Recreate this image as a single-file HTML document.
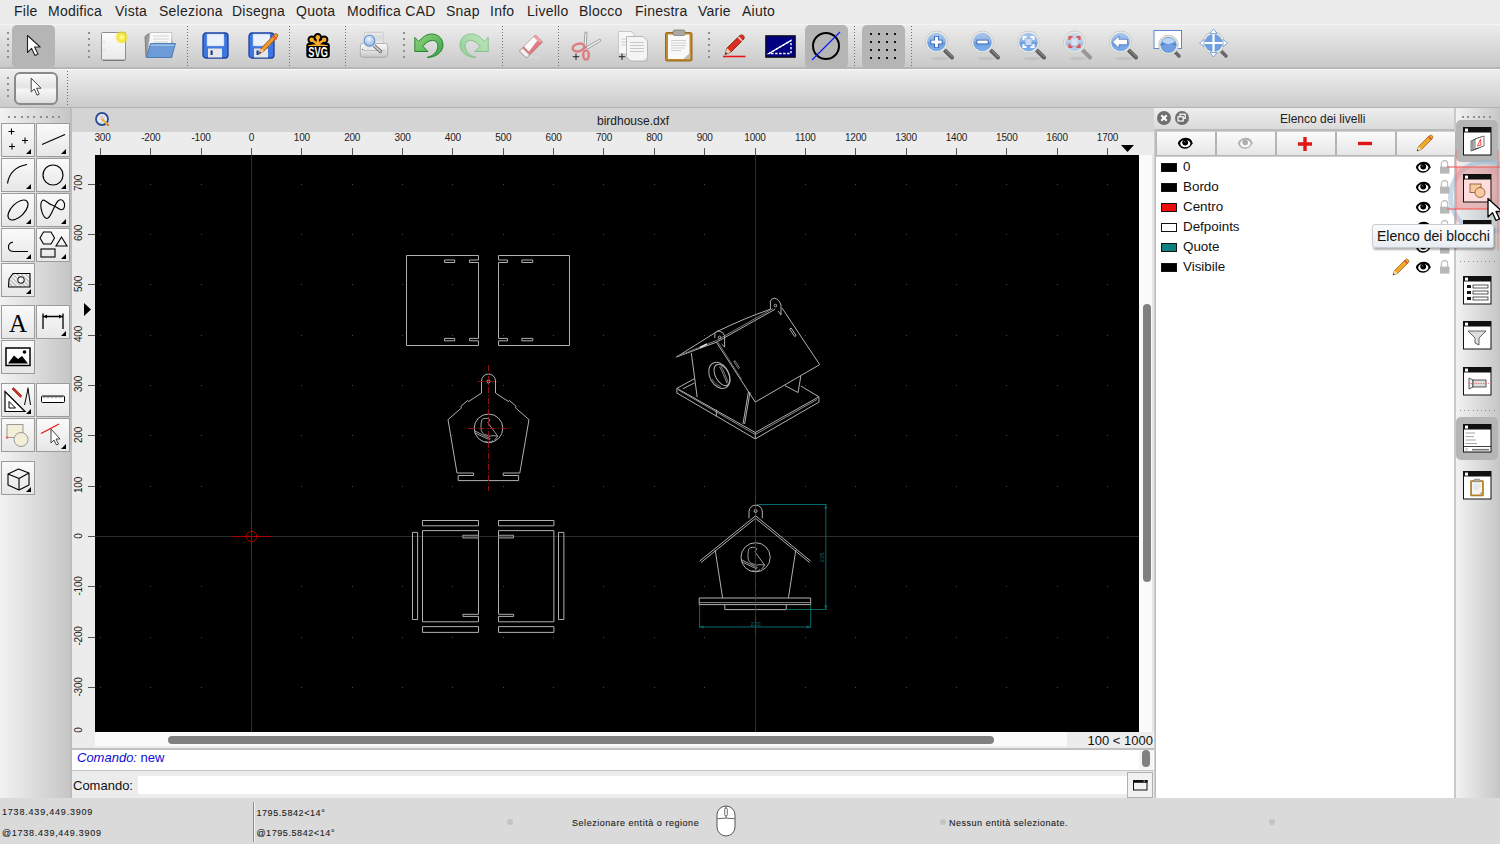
<!DOCTYPE html>
<html><head><meta charset="utf-8"><style>
*{box-sizing:border-box;margin:0;padding:0}
html,body{width:1500px;height:844px;overflow:hidden;background:#ececec;font-family:"Liberation Sans",sans-serif;position:relative}
.a{position:absolute}
svg.a{overflow:visible}
#menubar{left:0;top:0;width:1500px;height:25px;background:#ebebeb;border-bottom:1px solid #f4f4f4}
#menubar span{position:absolute;top:3px;font-size:14px;color:#1e1e1e;line-height:16px;letter-spacing:0.25px}
#tb1{left:0;top:25px;width:1500px;height:44px;background:linear-gradient(#ececec,#c9c9c9);border-bottom:2px solid #b6b6b6}
#tb2{left:0;top:69px;width:1500px;height:39px;background:linear-gradient(#eeeeee,#cbcbcb);border-top:1px solid #f6f6f6;border-bottom:1px solid #b3b3b3}
#leftp{left:0;top:108px;width:72px;height:690px;background:linear-gradient(90deg,#f2f2f2,#c6c6c6);border-right:2px solid #bdbdbd}
#mdititle{left:72px;top:108px;width:1082px;height:24px;background:#d4d4d4}
#hruler{left:72px;top:132px;width:1082px;height:23px;background:#ececec}
#vruler{left:72px;top:155px;width:23px;height:592px;background:#ececec}
#canvas{left:95px;top:155px;width:1044px;height:577px;background:#000;overflow:hidden}
#vscroll{left:1139px;top:155px;width:15px;height:577px;background:linear-gradient(90deg,#fafafa 0 13px,#e6e6e6 13px)}
#hscroll{left:95px;top:732px;width:1059px;height:16px;background:linear-gradient(#fafafa 0 14px,#ededed 14px)}
#cmdout{left:72px;top:748px;width:1082px;height:23px;background:#fff;border-top:2px solid #c0c0c0;border-bottom:1px solid #c4c4c4}
#cmdin{left:72px;top:771px;width:1082px;height:27px;background:#ececec}
#status{left:0;top:798px;width:1500px;height:46px;background:#dadada}
#dock{left:1154px;top:108px;width:302px;height:690px;background:#ececec;border-right:2px solid #c9c9c9}
#rtb{left:1456px;top:108px;width:44px;height:690px;background:linear-gradient(90deg,#f2f2f2,#c6c6c6)}
.rl{font-size:10px;color:#222;line-height:10px;letter-spacing:-0.2px}
.gd{width:2px;height:2px;background:#8f8f8f}
.sep{width:1px;background:repeating-linear-gradient(#6e6e6e 0 1px,transparent 1px 3px)}
.selbtn{background:#b5b5b5;border-radius:5px}
.lb{width:34px;height:34px;border:1px solid #9c9c9c;background:linear-gradient(#fafafa,#e7e7e7)}
.lyb{width:60px;height:25px;border:1px solid #b5b5b5;border-top-color:#d0d0d0;background:linear-gradient(#fbfbfb,#e6e6e6)}
.st{font-size:9px;line-height:12px;color:#1a1a1a;-webkit-text-stroke:0.1px #1a1a1a;white-space:nowrap}
</style></head><body>
<div id="menubar" class="a"><span style="left:14px">File</span><span style="left:48px">Modifica</span><span style="left:115px">Vista</span><span style="left:159px">Seleziona</span><span style="left:232px">Disegna</span><span style="left:296px">Quota</span><span style="left:347px">Modifica CAD</span><span style="left:446px">Snap</span><span style="left:490px">Info</span><span style="left:527px">Livello</span><span style="left:579px">Blocco</span><span style="left:635px">Finestra</span><span style="left:698px">Varie</span><span style="left:742px">Aiuto</span></div>
<div id="tb1" class="a"></div>
<div class="a gd" style="left:7px;top:32px"></div><div class="a gd" style="left:7px;top:38px"></div><div class="a gd" style="left:7px;top:44px"></div><div class="a gd" style="left:7px;top:50px"></div><div class="a gd" style="left:7px;top:56px"></div>
<div class="a selbtn" style="left:12px;top:25px;width:43px;height:43px"></div>
<svg class="a" style="left:26px;top:34px" width="16" height="24" viewBox="0 0 16 24"><path d="M1.5 1.5V18.5L5.6 14.4L9 21.5L12 20L8.6 13H14.2Z" fill="#fff" stroke="#222" stroke-width="1.1" stroke-linejoin="round"/></svg>
<div class="a gd" style="left:88px;top:32px"></div><div class="a gd" style="left:88px;top:38px"></div><div class="a gd" style="left:88px;top:44px"></div><div class="a gd" style="left:88px;top:50px"></div><div class="a gd" style="left:88px;top:56px"></div>
<svg class="a" style="left:99px;top:30px" width="30" height="32" viewBox="0 0 30 32"><defs><linearGradient id="pg" x1="0" y1="0" x2="0" y2="1"><stop offset="0" stop-color="#fdfdfd"/><stop offset="1" stop-color="#e9e9e9"/></linearGradient><radialGradient id="glow"><stop offset="0" stop-color="#ffffff"/><stop offset="0.25" stop-color="#fff36a"/><stop offset="0.6" stop-color="#f2e21c" stop-opacity="0.9"/><stop offset="1" stop-color="#f2e21c" stop-opacity="0"/></radialGradient></defs><rect x="2.5" y="2.5" width="24" height="27.5" rx="1" fill="url(#pg)" stroke="#8e8e8e"/><path d="M4 30.5h22" stroke="#777" stroke-width="1"/><circle cx="5" cy="12" r="0.5" fill="#999"/><circle cx="5" cy="20" r="0.5" fill="#999"/><circle cx="22.7" cy="7.3" r="7" fill="url(#glow)"/></svg>
<svg class="a" style="left:142px;top:30px" width="36" height="30" viewBox="0 0 36 30"><path d="M3 6.5L6 4H28L30 12V27H4Z" fill="#9b9b9b" stroke="#6f6f6f" stroke-width="0.8"/><path d="M8 2.5H30L29 20H6Z" fill="#fafafa" stroke="#b9b9b9" stroke-width="0.8"/><path d="M11 6H27M11 9H27M11 12H26" stroke="#cfcfcf" stroke-width="1"/><path d="M8.5 13.5H33.5L29.5 27.5H4.5Z" fill="#6d9bd7" stroke="#4b78b5" stroke-width="0.9"/><path d="M9 14.5H32.5L32 16H8.8Z" fill="#9fc1ec"/></svg>
<div class="a sep" style="left:187px;top:26px;height:41px"></div>
<svg class="a" style="left:202px;top:32px" width="28" height="28" viewBox="0 0 28 28"><rect x="1" y="1" width="25" height="25" rx="3" fill="#3d78e0" stroke="#1e3e9c" stroke-width="1.3"/><rect x="5" y="2" width="17" height="12" fill="#eaf1fb"/><path d="M5 2h17v12H5z" fill="none" stroke="#9fb9e4" stroke-width="0.5"/><rect x="6" y="16.5" width="14" height="9" fill="#e6e6e6"/><rect x="8.5" y="18.5" width="2.2" height="4.5" fill="#1b3c9c"/><rect x="22.5" y="3" width="1" height="1.2" fill="#1e3e9c"/></svg>
<svg class="a" style="left:248px;top:32px" width="30" height="28" viewBox="0 0 30 28"><rect x="1" y="1" width="25" height="25" rx="3" fill="#3d78e0" stroke="#1e3e9c" stroke-width="1.3"/><rect x="5" y="2" width="17" height="12" fill="#eaf1fb"/><path d="M5 2h17v12H5z" fill="none" stroke="#9fb9e4" stroke-width="0.5"/><rect x="6" y="16.5" width="14" height="9" fill="#e6e6e6"/><rect x="8.5" y="18.5" width="2.2" height="4.5" fill="#1b3c9c"/><rect x="22.5" y="3" width="1" height="1.2" fill="#1e3e9c"/><path d="M11 22L13.5 16L26.5 2.5C27.5 1.5 29 1.5 29.5 2.5C30 3.5 29.8 4.5 29 5.3L16 19Z" fill="#f29a2e" stroke="#9c4f0a" stroke-width="0.9"/><path d="M25 4L28.5 7.5" stroke="#e85a3a" stroke-width="2"/><path d="M11 22L13.3 16.6L15.8 19.2Z" fill="#f2d2a8"/><path d="M11 22L12 19.8L13.2 21Z" fill="#222"/></svg>
<div class="a sep" style="left:289px;top:26px;height:41px"></div>
<svg class="a" style="left:300px;top:30px" width="36" height="32" viewBox="0 0 36 32"><g stroke="#000" stroke-width="3.2" stroke-linecap="round"><path d="M11.7 9.7L17.8 14.5M24.2 9.7L17.8 14.5M17.8 7.2V14.5"/><circle cx="17.8" cy="7.2" r="2.6"/><circle cx="11.7" cy="9.7" r="2.6"/><circle cx="24.2" cy="9.7" r="2.6"/></g><rect x="6.3" y="12.8" width="23.5" height="15.2" rx="3.2" fill="#000"/><g fill="#f9ad2c"><circle cx="17.8" cy="7.2" r="2.3"/><circle cx="11.7" cy="9.7" r="2.3"/><circle cx="24.2" cy="9.7" r="2.3"/></g><path d="M11.7 9.7L17.8 14.5M24.2 9.7L17.8 14.5M17.8 7.2V14.5" stroke="#f9ad2c" stroke-width="2.3"/><path d="M8 15.3Q18 13.3 28 15.3V16H8Z" fill="#f9ad2c"/><text transform="translate(18.1 26.8) scale(0.66 1)" font-family="Liberation Sans" font-weight="bold" font-size="14" fill="#fff" text-anchor="middle">SVG</text></svg>
<div class="a sep" style="left:345px;top:26px;height:41px"></div>
<svg class="a" style="left:358px;top:30px" width="32" height="30" viewBox="0 0 32 30"><defs><linearGradient id="prg" x1="0" y1="0" x2="0" y2="1"><stop offset="0" stop-color="#fafafa"/><stop offset="0.55" stop-color="#e2e2e2"/><stop offset="1" stop-color="#c4c4c4"/></linearGradient><radialGradient id="lens" cx="0.45" cy="0.35"><stop offset="0" stop-color="#eef4fb"/><stop offset="1" stop-color="#a8c2e2"/></radialGradient></defs><rect x="6.3" y="2.3" width="19" height="13" rx="1" fill="#e9e9e9" stroke="#c2c2c2" stroke-width="0.8"/><rect x="14" y="5" width="10" height="6" fill="#dcdcdc"/><rect x="2.3" y="13.5" width="27.4" height="13.8" rx="2.5" fill="url(#prg)" stroke="#a2a2a2" stroke-width="0.8"/><path d="M5 20.5H27" stroke="#bdbdbd" stroke-width="1"/><circle cx="4.6" cy="19.3" r="0.6" fill="#555"/><path d="M16 15.5L22.5 21.5" stroke="#555" stroke-width="3.2" stroke-linecap="round"/><path d="M16 15.5L22.5 21.5" stroke="#c9c9c9" stroke-width="1.8" stroke-linecap="round"/><circle cx="11.5" cy="10.7" r="6.6" fill="#f4f4f4" stroke="#d0d0d0" stroke-width="0.6"/><circle cx="11.5" cy="10.7" r="5.4" fill="url(#lens)" stroke="#5b8fd0" stroke-width="1.1"/></svg>
<div class="a gd" style="left:403px;top:32px"></div><div class="a gd" style="left:403px;top:38px"></div><div class="a gd" style="left:403px;top:44px"></div><div class="a gd" style="left:403px;top:50px"></div><div class="a gd" style="left:403px;top:56px"></div>
<svg class="a" style="left:408px;top:28px" width="40" height="36" viewBox="0 0 40 36"><defs><linearGradient id="ug1" x1="0" y1="0" x2="1" y2="1"><stop offset="0" stop-color="#93d47c"/><stop offset="1" stop-color="#36a446"/></linearGradient></defs><path d="M6.8 9.4L10.7 13.6C14 9.5 18.5 6 23.9 6C30.5 6 35 11 35 17C35 24 28 29.5 19.2 29.4C25 28 29.9 23.5 29.9 17.9C29.9 14.5 27.5 12.4 24.5 12.4C21 12.4 17.5 15 14.9 18.3L20 23.5H6.8Z" fill="url(#ug1)" stroke="#1c7a2a" stroke-width="0.9" stroke-linejoin="round"/></svg>
<svg class="a" style="left:455px;top:28px" width="40" height="36" viewBox="0 0 40 36"><g transform="translate(40 0) scale(-1 1)"><defs><linearGradient id="ug2" x1="0" y1="0" x2="1" y2="1"><stop offset="0" stop-color="#c4e6bd"/><stop offset="1" stop-color="#8fcf96"/></linearGradient></defs><path d="M6.8 9.4L10.7 13.6C14 9.5 18.5 6 23.9 6C30.5 6 35 11 35 17C35 24 28 29.5 19.2 29.4C25 28 29.9 23.5 29.9 17.9C29.9 14.5 27.5 12.4 24.5 12.4C21 12.4 17.5 15 14.9 18.3L20 23.5H6.8Z" fill="url(#ug2)" stroke="#7cbf84" stroke-width="0.9" stroke-linejoin="round"/></g></svg>
<div class="a sep" style="left:502px;top:26px;height:41px"></div>
<svg class="a" style="left:516px;top:31px" width="30" height="30" viewBox="0 0 30 30"><ellipse cx="15" cy="26" rx="11" ry="1.6" fill="#d6d6d6"/><path d="M3.5 20L19.5 4L26.5 11L10.5 27Z" fill="#e07b80" stroke="#b7646a" stroke-width="0.8"/><path d="M8 15.5L13 20.5L22.5 8L17.5 6Z" fill="#fafafa"/><path d="M17.5 6L22.5 11L26.5 11L19.5 4Z" fill="#eaa3a7"/><path d="M3.5 20L10.5 27L13.5 24L6.5 17Z" fill="#f3f3f3" stroke="#9a9a9a" stroke-width="0.7"/></svg>
<div class="a sep" style="left:558px;top:26px;height:41px"></div>
<svg class="a" style="left:571px;top:30px" width="32" height="32" viewBox="0 0 32 32"><path d="M13 16L14 2L16 2.5L15.2 17Z" fill="#f0f0f0" stroke="#8f8f8f" stroke-width="0.8"/><path d="M15 17L29 9L30 11L16.5 19Z" fill="#f0f0f0" stroke="#8f8f8f" stroke-width="0.8"/><ellipse cx="7.5" cy="17.5" rx="6" ry="3.8" transform="rotate(-15 7.5 17.5)" fill="none" stroke="#e07b80" stroke-width="2.4"/><ellipse cx="15" cy="25" rx="2.8" ry="4.6" fill="none" stroke="#e07b80" stroke-width="2.4"/><path d="M12.5 18L15 17" stroke="#e07b80" stroke-width="2"/><path d="M5 23.5V30M1.8 26.7H8.2" stroke="#222" stroke-width="1"/></svg>
<svg class="a" style="left:617px;top:30px" width="32" height="32" viewBox="0 0 32 32"><path d="M1.5 1.5H14L17 4V24H1.5Z" fill="#f7f7f7" stroke="#bdbdbd" stroke-width="0.8"/><path d="M4 9H13M4 12H13M4 15H13" stroke="#d0d0d0"/><path d="M9.5 6.5H26L30.5 11V31H13.5L9.5 27Z" fill="#f4f4f4" stroke="#a9a9a9" stroke-width="0.8"/><path d="M13 12.5H27M13 15.5H27M13 18.5H27M13 21.5H27" stroke="#c8c8c8"/><path d="M26 31L30.5 26.5V31Z" fill="#cfcfcf"/><path d="M5 23.5V30M1.8 26.7H8.2" stroke="#222" stroke-width="1"/></svg>
<svg class="a" style="left:664px;top:29px" width="30" height="33" viewBox="0 0 30 33"><rect x="1.5" y="3.5" width="26.5" height="28.5" rx="1.5" fill="#c08a2a" stroke="#8f6216" stroke-width="0.9"/><rect x="4" y="5.5" width="21.5" height="24.5" fill="#f9f9f9"/><path d="M7 11.5H22M7 14H22M7 16.5H22M7 19H21M7 21.5H17" stroke="#cfcfcf" stroke-width="1"/><path d="M25.5 24L19.5 30H25.5Z" fill="#bcbcbc"/><rect x="9" y="1" width="12" height="5.5" rx="1.5" fill="#a9a9a2" stroke="#7e7e77" stroke-width="0.8"/></svg>
<div class="a gd" style="left:708px;top:32px"></div><div class="a gd" style="left:708px;top:38px"></div><div class="a gd" style="left:708px;top:44px"></div><div class="a gd" style="left:708px;top:50px"></div><div class="a gd" style="left:708px;top:56px"></div>
<svg class="a" style="left:722px;top:34px" width="26" height="25" viewBox="0 0 26 25"><path d="M1 22.5H23.5" stroke="#e8141b" stroke-width="1.6"/><path d="M3 20.5L5 14L17.5 1.8C18.7 0.7 20.5 0.7 21.5 1.7C22.5 2.7 22.5 4.5 21.3 5.7L9 18Z" fill="#dc2c24" stroke="#7a2a12" stroke-width="0.9"/><path d="M16.2 3L20.2 7" stroke="#e9e3d6" stroke-width="1.6"/><path d="M3 20.5L5 14L9 18Z" fill="#f1cfa6"/><path d="M3 20.5L3.8 18L5.5 19.7Z" fill="#333"/></svg>
<svg class="a" style="left:765px;top:35px" width="31" height="23" viewBox="0 0 31 23"><rect x="0.8" y="0.8" width="29.4" height="21.4" fill="#000080" stroke="#111" stroke-width="1.2"/><path d="M4 18.5L26 5.5V18.5Z" fill="none" stroke="#fff" stroke-width="1.4" stroke-dasharray="2.4 1.6"/><path d="M4 18.5L26 5.5" stroke="#fff" stroke-width="1.4"/></svg>
<div class="a selbtn" style="left:805px;top:25px;width:43px;height:43px"></div>
<svg class="a" style="left:810px;top:30px" width="32" height="32" viewBox="0 0 32 32"><circle cx="16" cy="16" r="13" fill="none" stroke="#000" stroke-width="2"/><path d="M2 30L30 2" stroke="#0a1bf0" stroke-width="1.1"/></svg>
<div class="a sep" style="left:854px;top:26px;height:41px"></div>
<div class="a selbtn" style="left:862px;top:25px;width:43px;height:43px"></div>
<div class="a" style="left:870px;top:33px;width:2px;height:2px;background:#111"></div><div class="a" style="left:870px;top:41px;width:2px;height:2px;background:#111"></div><div class="a" style="left:870px;top:49px;width:2px;height:2px;background:#111"></div><div class="a" style="left:870px;top:57px;width:2px;height:2px;background:#111"></div><div class="a" style="left:878px;top:33px;width:2px;height:2px;background:#111"></div><div class="a" style="left:878px;top:41px;width:2px;height:2px;background:#111"></div><div class="a" style="left:878px;top:49px;width:2px;height:2px;background:#111"></div><div class="a" style="left:878px;top:57px;width:2px;height:2px;background:#111"></div><div class="a" style="left:886px;top:33px;width:2px;height:2px;background:#111"></div><div class="a" style="left:886px;top:41px;width:2px;height:2px;background:#111"></div><div class="a" style="left:886px;top:49px;width:2px;height:2px;background:#111"></div><div class="a" style="left:886px;top:57px;width:2px;height:2px;background:#111"></div><div class="a" style="left:894px;top:33px;width:2px;height:2px;background:#111"></div><div class="a" style="left:894px;top:41px;width:2px;height:2px;background:#111"></div><div class="a" style="left:894px;top:49px;width:2px;height:2px;background:#111"></div><div class="a" style="left:894px;top:57px;width:2px;height:2px;background:#111"></div>
<div class="a sep" style="left:911px;top:26px;height:41px"></div>
<svg class="a" style="left:925px;top:30px" width="30" height="31" viewBox="0 0 30 31"><defs><linearGradient id="zg936" x1="0" y1="0" x2="0" y2="1"><stop offset="0" stop-color="#a9c6ee"/><stop offset="0.48" stop-color="#8fb3e6"/><stop offset="0.52" stop-color="#6b9ddf"/><stop offset="1" stop-color="#7fb0ee"/></linearGradient></defs><ellipse cx="15" cy="28.5" rx="9" ry="1.8" fill="#000" opacity="0.06"/><path d="M20 20.5L27 27.5" stroke="#5f5f5f" stroke-width="4" stroke-linecap="round"/><path d="M20.5 20L27.5 27" stroke="#9a9a9a" stroke-width="1" /><circle cx="11.5" cy="12" r="11" fill="#ecece6" stroke="#c9c9bf" stroke-width="0.9"/><circle cx="11.5" cy="12" r="9.3" fill="url(#zg936)"/><path d="M11.5 6V18M5.5 12H17.5" stroke="#2d5fb0" stroke-width="4.6"/><path d="M11.5 6.8V17.2M6.3 12H16.7" stroke="#fff" stroke-width="2.9"/></svg>
<svg class="a" style="left:971px;top:30px" width="30" height="31" viewBox="0 0 30 31"><defs><linearGradient id="zg982" x1="0" y1="0" x2="0" y2="1"><stop offset="0" stop-color="#a9c6ee"/><stop offset="0.48" stop-color="#8fb3e6"/><stop offset="0.52" stop-color="#6b9ddf"/><stop offset="1" stop-color="#7fb0ee"/></linearGradient></defs><ellipse cx="15" cy="28.5" rx="9" ry="1.8" fill="#000" opacity="0.06"/><path d="M20 20.5L27 27.5" stroke="#5f5f5f" stroke-width="4" stroke-linecap="round"/><path d="M20.5 20L27.5 27" stroke="#9a9a9a" stroke-width="1" /><circle cx="11.5" cy="12" r="11" fill="#ecece6" stroke="#c9c9bf" stroke-width="0.9"/><circle cx="11.5" cy="12" r="9.3" fill="url(#zg982)"/><path d="M5.5 12H17.5" stroke="#2d5fb0" stroke-width="4.6"/><path d="M6.3 12H16.7" stroke="#fff" stroke-width="2.9"/></svg>
<svg class="a" style="left:1017px;top:30px" width="30" height="31" viewBox="0 0 30 31"><defs><linearGradient id="zg1028" x1="0" y1="0" x2="0" y2="1"><stop offset="0" stop-color="#a9c6ee"/><stop offset="0.48" stop-color="#8fb3e6"/><stop offset="0.52" stop-color="#6b9ddf"/><stop offset="1" stop-color="#7fb0ee"/></linearGradient></defs><ellipse cx="15" cy="28.5" rx="9" ry="1.8" fill="#000" opacity="0.06"/><path d="M20 20.5L27 27.5" stroke="#5f5f5f" stroke-width="4" stroke-linecap="round"/><path d="M20.5 20L27.5 27" stroke="#9a9a9a" stroke-width="1" /><circle cx="11.5" cy="12" r="11" fill="#ecece6" stroke="#c9c9bf" stroke-width="0.9"/><circle cx="11.5" cy="12" r="9.3" fill="url(#zg1028)"/><path d="M6.5 10V7H9.5M13.5 7H16.5V10M16.5 14V17H13.5M9.5 17H6.5V14" fill="none" stroke="#fff" stroke-width="2"/><rect x="8.5" y="9" width="6" height="6" fill="#c9dbf2"/></svg>
<svg class="a" style="left:1063px;top:30px" width="30" height="31" viewBox="0 0 30 31"><defs><linearGradient id="zg1074" x1="0" y1="0" x2="0" y2="1"><stop offset="0" stop-color="#a9c6ee"/><stop offset="0.48" stop-color="#8fb3e6"/><stop offset="0.52" stop-color="#6b9ddf"/><stop offset="1" stop-color="#7fb0ee"/></linearGradient></defs><ellipse cx="15" cy="28.5" rx="9" ry="1.8" fill="#000" opacity="0.06"/><path d="M20 20.5L27 27.5" stroke="#5f5f5f" stroke-width="4" stroke-linecap="round" opacity="0.5"/><path d="M20.5 20L27.5 27" stroke="#9a9a9a" stroke-width="1"  opacity="0.5"/><circle cx="11.5" cy="12" r="11" fill="#ecece6" stroke="#c9c9bf" stroke-width="0.9"/><circle cx="11.5" cy="12" r="9.3" fill="url(#zg1074)" opacity="0.5"/><path d="M6.5 10V7H9.5M13.5 7H16.5V10M16.5 14V17H13.5M9.5 17H6.5V14" fill="none" stroke="#e25555" stroke-width="2.2"/><rect x="8.5" y="9" width="6" height="6" fill="#d5e3f5"/></svg>
<svg class="a" style="left:1109px;top:30px" width="30" height="31" viewBox="0 0 30 31"><defs><linearGradient id="zg1120" x1="0" y1="0" x2="0" y2="1"><stop offset="0" stop-color="#a9c6ee"/><stop offset="0.48" stop-color="#8fb3e6"/><stop offset="0.52" stop-color="#6b9ddf"/><stop offset="1" stop-color="#7fb0ee"/></linearGradient></defs><ellipse cx="15" cy="28.5" rx="9" ry="1.8" fill="#000" opacity="0.06"/><path d="M20 20.5L27 27.5" stroke="#5f5f5f" stroke-width="4" stroke-linecap="round"/><path d="M20.5 20L27.5 27" stroke="#9a9a9a" stroke-width="1" /><circle cx="11.5" cy="12" r="11" fill="#ecece6" stroke="#c9c9bf" stroke-width="0.9"/><circle cx="11.5" cy="12" r="9.3" fill="url(#zg1120)"/><path d="M3.5 12L10 5.8V9.3H18.5V14.7H10V18.2Z" fill="#fff" stroke="#3d6fb8" stroke-width="0.7" stroke-linejoin="round"/></svg>
<svg class="a" style="left:1153px;top:30px" width="32" height="31" viewBox="0 0 32 31"><rect x="1" y="0.5" width="27.5" height="18" fill="#fff" stroke="#5b8ad0" stroke-width="1"/><path d="M20 20L26 26" stroke="#6a6a6a" stroke-width="3.6" stroke-linecap="round"/><circle cx="15.5" cy="15" r="9.8" fill="#e9e9e4" stroke="#c6c6bd"/><circle cx="15.5" cy="15" r="8" fill="#6f9fe0"/><path d="M7.5 15Q15.5 11 23.5 15" fill="none" stroke="#4f82cc" stroke-width="1.5"/><ellipse cx="15.5" cy="11" rx="6" ry="3" fill="#bcd4f2"/></svg>
<svg class="a" style="left:1199px;top:29px" width="32" height="32" viewBox="0 0 32 32"><path d="M21 21L27 27" stroke="#6a6a6a" stroke-width="3.6" stroke-linecap="round"/><circle cx="14.5" cy="14" r="11" fill="#e9e9e4" stroke="#c6c6bd"/><circle cx="14.5" cy="14" r="9" fill="#6f9fe0"/><path d="M14.5 1V27M1.5 14H27.5" stroke="#fff" stroke-width="2.2"/><path d="M14.5 0L11 4.5H18ZM14.5 28L11 23.5H18ZM0.5 14L5 10.5V17.5ZM28.5 14L24 10.5V17.5Z" fill="#fff" stroke="#5b8ad0" stroke-width="0.7"/></svg>
<div id="tb2" class="a"></div>
<div class="a gd" style="left:7px;top:77px"></div><div class="a gd" style="left:7px;top:83px"></div><div class="a gd" style="left:7px;top:89px"></div><div class="a gd" style="left:7px;top:95px"></div>
<div class="a" style="left:14px;top:72px;width:44px;height:33px;border:2px solid #8a8a8a;border-radius:6px;background:linear-gradient(#fafafa,#e3e3e3 45%,#f6f6f6 55%,#dedede)"></div>
<svg class="a" style="left:30px;top:77px" width="12" height="20" viewBox="0 0 12 20"><path d="M1.2 1.2V15L4.3 12L7 18.2L9.2 17.2L6.6 11.2H11Z" fill="#fff" stroke="#333" stroke-width="0.9" stroke-linejoin="round"/></svg>
<div class="a sep" style="left:67px;top:71px;height:34px"></div>
<div id="leftp" class="a"></div>
<div class="a gd" style="left:8.0px;top:116px"></div><div class="a gd" style="left:14.3px;top:116px"></div><div class="a gd" style="left:20.6px;top:116px"></div><div class="a gd" style="left:26.9px;top:116px"></div><div class="a gd" style="left:33.2px;top:116px"></div><div class="a gd" style="left:39.5px;top:116px"></div><div class="a gd" style="left:45.8px;top:116px"></div><div class="a gd" style="left:52.1px;top:116px"></div><div class="a gd" style="left:58.4px;top:116px"></div>
<div class="a lb" style="left:1px;top:123px"></div><svg class="a" style="left:1px;top:123px" width="34" height="34" viewBox="0 0 34 34"><path d="M7.5 8.5h6M10.5 5.5v6M21 17.5h6M24 14.5v6M8 23.5h6M11 20.5v6" stroke="#000" stroke-width="1.1"/><path d="M30 26L30 31L25 31Z" fill="#000"/></svg>
<div class="a lb" style="left:36px;top:123px"></div><svg class="a" style="left:36px;top:123px" width="34" height="34" viewBox="0 0 34 34"><path d="M6 21.5L29 11.5" stroke="#000" stroke-width="1.2"/><path d="M30 26L30 31L25 31Z" fill="#000"/></svg>
<div class="a lb" style="left:1px;top:158px"></div><svg class="a" style="left:1px;top:158px" width="34" height="34" viewBox="0 0 34 34"><path d="M6.5 25.5Q9 9.5 26 6.5" fill="none" stroke="#000" stroke-width="1.2"/><path d="M30 26L30 31L25 31Z" fill="#000"/></svg>
<div class="a lb" style="left:36px;top:158px"></div><svg class="a" style="left:36px;top:158px" width="34" height="34" viewBox="0 0 34 34"><circle cx="17" cy="17" r="10" fill="none" stroke="#000" stroke-width="1.2"/><path d="M30 26L30 31L25 31Z" fill="#000"/></svg>
<div class="a lb" style="left:1px;top:193px"></div><svg class="a" style="left:1px;top:193px" width="34" height="34" viewBox="0 0 34 34"><ellipse cx="17" cy="17" rx="12.5" ry="6.5" transform="rotate(-45 17 17)" fill="none" stroke="#000" stroke-width="1.2"/><path d="M30 26L30 31L25 31Z" fill="#000"/></svg>
<div class="a lb" style="left:36px;top:193px"></div><svg class="a" style="left:36px;top:193px" width="34" height="34" viewBox="0 0 34 34"><path d="M6 8C3 12 7 28 12 25C16 22 18 12 22 8C26 4 30 10 28 15C26 20 20 13 16 12C12 11 8 5 6 8Z" fill="none" stroke="#000" stroke-width="1.1"/><path d="M30 26L30 31L25 31Z" fill="#000"/></svg>
<div class="a lb" style="left:1px;top:228px"></div><svg class="a" style="left:1px;top:228px" width="34" height="34" viewBox="0 0 34 34"><path d="M12 14Q7 15 7.5 20Q8 23.5 13 23.5H27" fill="none" stroke="#000" stroke-width="1.1"/><path d="M30 26L30 31L25 31Z" fill="#000"/></svg>
<div class="a lb" style="left:36px;top:228px"></div><svg class="a" style="left:36px;top:228px" width="34" height="34" viewBox="0 0 34 34"><path d="M4 10L7.5 4H15L18.5 10L15 16H7.5Z" fill="none" stroke="#000" stroke-width="1.1"/><path d="M25.5 9L31 18H20Z" fill="none" stroke="#000" stroke-width="1.1"/><rect x="5" y="21" width="14" height="8" fill="none" stroke="#000" stroke-width="1.1"/><path d="M30 26L30 31L25 31Z" fill="#000"/></svg>
<div class="a lb" style="left:1px;top:263px"></div><svg class="a" style="left:1px;top:263px" width="34" height="34" viewBox="0 0 34 34"><defs><pattern id="hatch" width="3" height="3" patternUnits="userSpaceOnUse" patternTransform="rotate(-45)"><path d="M0 0V3" stroke="#555" stroke-width="0.8"/></pattern></defs><path d="M8 16L12 10.5H29V24H7.5Z" fill="url(#hatch)" stroke="#000" stroke-width="1.1"/><circle cx="20" cy="17" r="3.3" fill="#f4f4f4" stroke="#000" stroke-width="1"/><path d="M30 26L30 31L25 31Z" fill="#000"/></svg>
<div class="a lb" style="left:1px;top:305px"></div><svg class="a" style="left:1px;top:305px" width="34" height="34" viewBox="0 0 34 34"><text x="17" y="27" font-family="Liberation Serif" font-size="25" text-anchor="middle" fill="#000">A</text></svg>
<div class="a lb" style="left:36px;top:305px"></div><svg class="a" style="left:36px;top:305px" width="34" height="34" viewBox="0 0 34 34"><path d="M7 8.5V24M27 8.5V24M7.5 11.5H26.5" stroke="#000" stroke-width="1.3"/><path d="M7.5 11.5L11 9.5V13.5ZM26.5 11.5L23 9.5V13.5Z" fill="#000"/><path d="M30 26L30 31L25 31Z" fill="#000"/></svg>
<div class="a lb" style="left:1px;top:340px"></div><svg class="a" style="left:1px;top:340px" width="34" height="34" viewBox="0 0 34 34"><rect x="5" y="8" width="24" height="17.5" fill="#fff" stroke="#000" stroke-width="1.5"/><path d="M7 23.5L13 15.5L17 19L21 16L27 23.5Z" fill="#000"/><circle cx="23.5" cy="12" r="1.8" fill="#000"/></svg>
<div class="a lb" style="left:1px;top:383px"></div><svg class="a" style="left:1px;top:383px" width="34" height="34" viewBox="0 0 34 34"><path d="M4 28.5V8.5L24 28.5Z" fill="#fff" stroke="#000" stroke-width="1.2"/><path d="M8 25V18.5L14.5 25Z" fill="none" stroke="#000" stroke-width="1"/><path d="M11 6L19.5 14.5L21 13L12.5 4.5Z" fill="#d62a1e" stroke="#6e1a10" stroke-width="0.6"/><path d="M19.5 14.5L21.5 15L21 13Z" fill="#f1cfa6"/><path d="M27 6L23.5 22M27 6L29.5 22M27 4.5V7" fill="none" stroke="#000" stroke-width="1"/><path d="M30 26L30 31L25 31Z" fill="#000"/></svg>
<div class="a lb" style="left:36px;top:383px"></div><svg class="a" style="left:36px;top:383px" width="34" height="34" viewBox="0 0 34 34"><rect x="5.5" y="13" width="23" height="6.5" rx="1" fill="#fff" stroke="#000" stroke-width="1"/><path d="M8 13v2.2M10 13v1.5M12 13v2.2M14 13v1.5M16 13v2.2M18 13v1.5M20 13v2.2M22 13v1.5M24 13v2.2M26 13v1.5" stroke="#000" stroke-width="0.6"/></svg>
<div class="a lb" style="left:1px;top:418px"></div><svg class="a" style="left:1px;top:418px" width="34" height="34" viewBox="0 0 34 34"><rect x="6" y="6.5" width="16" height="13" fill="#f3eed8" stroke="#999" stroke-width="1"/><circle cx="20" cy="21.5" r="7" fill="#f3eed8" stroke="#999" stroke-width="1"/><circle cx="6" cy="19.5" r="1.2" fill="#f06060"/></svg>
<div class="a lb" style="left:36px;top:418px"></div><svg class="a" style="left:36px;top:418px" width="34" height="34" viewBox="0 0 34 34"><path d="M5 15.5L23 6" stroke="#e8181b" stroke-width="1.3"/><path d="M15 11V25L18 22L20.5 27L22.5 26L20 21H24Z" fill="#fff" stroke="#333" stroke-width="0.9" stroke-linejoin="round"/><path d="M30 26L30 31L25 31Z" fill="#000"/></svg>
<div class="a lb" style="left:1px;top:461px"></div><svg class="a" style="left:1px;top:461px" width="34" height="34" viewBox="0 0 34 34"><path d="M7 13L17.5 8L28 12V24L18 29L7 24Z M7 13L18 17.5L28 12 M18 17.5V29" fill="none" stroke="#000" stroke-width="1.1" stroke-linejoin="round"/><path d="M30 26L30 31L25 31Z" fill="#000"/></svg>
<div id="mdititle" class="a"></div>
<svg class="a" style="left:95px;top:112px" width="15" height="15" viewBox="0 0 15 15"><circle cx="7" cy="7" r="6" fill="#e8ecf4" stroke="#2b4a9a" stroke-width="1.8"/><path d="M4 5h6M4 7h6M7 3v8" stroke="#d89090" stroke-width="0.5"/><path d="M7 7L13 13" stroke="#e7b62a" stroke-width="2"/><circle cx="13" cy="13" r="1" fill="#e05050"/></svg>
<div class="a" style="left:597px;top:113.5px;font-size:12px;line-height:14px;color:#1a1a1a">birdhouse.dxf</div>
<div id="hruler" class="a"></div>
<div class="a" style="left:100px;top:148px;width:1px;height:7px;background:#555"></div><div class="a" style="left:150px;top:148px;width:1px;height:7px;background:#555"></div><div class="a" style="left:201px;top:148px;width:1px;height:7px;background:#555"></div><div class="a" style="left:251px;top:148px;width:1px;height:7px;background:#555"></div><div class="a" style="left:301px;top:148px;width:1px;height:7px;background:#555"></div><div class="a" style="left:352px;top:148px;width:1px;height:7px;background:#555"></div><div class="a" style="left:402px;top:148px;width:1px;height:7px;background:#555"></div><div class="a" style="left:452px;top:148px;width:1px;height:7px;background:#555"></div><div class="a" style="left:503px;top:148px;width:1px;height:7px;background:#555"></div><div class="a" style="left:553px;top:148px;width:1px;height:7px;background:#555"></div><div class="a" style="left:603px;top:148px;width:1px;height:7px;background:#555"></div><div class="a" style="left:654px;top:148px;width:1px;height:7px;background:#555"></div><div class="a" style="left:704px;top:148px;width:1px;height:7px;background:#555"></div><div class="a" style="left:755px;top:148px;width:1px;height:7px;background:#555"></div><div class="a" style="left:805px;top:148px;width:1px;height:7px;background:#555"></div><div class="a" style="left:855px;top:148px;width:1px;height:7px;background:#555"></div><div class="a" style="left:906px;top:148px;width:1px;height:7px;background:#555"></div><div class="a" style="left:956px;top:148px;width:1px;height:7px;background:#555"></div><div class="a" style="left:1006px;top:148px;width:1px;height:7px;background:#555"></div><div class="a" style="left:1057px;top:148px;width:1px;height:7px;background:#555"></div><div class="a" style="left:1107px;top:148px;width:1px;height:7px;background:#555"></div><div class="a rl" style="left:94.5px;top:133px">300</div><div class="a rl" style="left:110.8px;top:133px;width:80px;text-align:center">-200</div><div class="a rl" style="left:161.1px;top:133px;width:80px;text-align:center">-100</div><div class="a rl" style="left:211.5px;top:133px;width:80px;text-align:center">0</div><div class="a rl" style="left:261.9px;top:133px;width:80px;text-align:center">100</div><div class="a rl" style="left:312.2px;top:133px;width:80px;text-align:center">200</div><div class="a rl" style="left:362.6px;top:133px;width:80px;text-align:center">300</div><div class="a rl" style="left:412.9px;top:133px;width:80px;text-align:center">400</div><div class="a rl" style="left:463.3px;top:133px;width:80px;text-align:center">500</div><div class="a rl" style="left:513.6px;top:133px;width:80px;text-align:center">600</div><div class="a rl" style="left:564.0px;top:133px;width:80px;text-align:center">700</div><div class="a rl" style="left:614.3px;top:133px;width:80px;text-align:center">800</div><div class="a rl" style="left:664.7px;top:133px;width:80px;text-align:center">900</div><div class="a rl" style="left:715.0px;top:133px;width:80px;text-align:center">1000</div><div class="a rl" style="left:765.4px;top:133px;width:80px;text-align:center">1100</div><div class="a rl" style="left:815.7px;top:133px;width:80px;text-align:center">1200</div><div class="a rl" style="left:866.1px;top:133px;width:80px;text-align:center">1300</div><div class="a rl" style="left:916.4px;top:133px;width:80px;text-align:center">1400</div><div class="a rl" style="left:966.8px;top:133px;width:80px;text-align:center">1500</div><div class="a rl" style="left:1017.1px;top:133px;width:80px;text-align:center">1600</div><div class="a rl" style="left:1067.5px;top:133px;width:80px;text-align:center">1700</div>
<svg class="a" style="left:1121px;top:145px" width="13" height="7"><path d="M0 0H13L6.5 7Z" fill="#000"/></svg>
<div id="vruler" class="a"></div>
<div class="a" style="left:88px;top:687px;width:7px;height:1px;background:#555"></div><div class="a rl" style="left:38.8px;top:681.6px;width:80px;text-align:center;transform:rotate(-90deg);letter-spacing:-0.2px">-300</div><div class="a" style="left:88px;top:637px;width:7px;height:1px;background:#555"></div><div class="a rl" style="left:38.8px;top:631.2px;width:80px;text-align:center;transform:rotate(-90deg);letter-spacing:-0.2px">-200</div><div class="a" style="left:88px;top:586px;width:7px;height:1px;background:#555"></div><div class="a rl" style="left:38.8px;top:580.9px;width:80px;text-align:center;transform:rotate(-90deg);letter-spacing:-0.2px">-100</div><div class="a" style="left:88px;top:536px;width:7px;height:1px;background:#555"></div><div class="a rl" style="left:38.8px;top:530.5px;width:80px;text-align:center;transform:rotate(-90deg);letter-spacing:-0.2px">0</div><div class="a" style="left:88px;top:486px;width:7px;height:1px;background:#555"></div><div class="a rl" style="left:38.8px;top:480.1px;width:80px;text-align:center;transform:rotate(-90deg);letter-spacing:-0.2px">100</div><div class="a" style="left:88px;top:435px;width:7px;height:1px;background:#555"></div><div class="a rl" style="left:38.8px;top:429.8px;width:80px;text-align:center;transform:rotate(-90deg);letter-spacing:-0.2px">200</div><div class="a" style="left:88px;top:385px;width:7px;height:1px;background:#555"></div><div class="a rl" style="left:38.8px;top:379.4px;width:80px;text-align:center;transform:rotate(-90deg);letter-spacing:-0.2px">300</div><div class="a" style="left:88px;top:335px;width:7px;height:1px;background:#555"></div><div class="a rl" style="left:38.8px;top:329.1px;width:80px;text-align:center;transform:rotate(-90deg);letter-spacing:-0.2px">400</div><div class="a" style="left:88px;top:284px;width:7px;height:1px;background:#555"></div><div class="a rl" style="left:38.8px;top:278.7px;width:80px;text-align:center;transform:rotate(-90deg);letter-spacing:-0.2px">500</div><div class="a" style="left:88px;top:234px;width:7px;height:1px;background:#555"></div><div class="a rl" style="left:38.8px;top:228.4px;width:80px;text-align:center;transform:rotate(-90deg);letter-spacing:-0.2px">600</div><div class="a" style="left:88px;top:184px;width:7px;height:1px;background:#555"></div><div class="a rl" style="left:38.8px;top:178.0px;width:80px;text-align:center;transform:rotate(-90deg);letter-spacing:-0.2px">700</div>
<div class="a rl" style="left:38.8px;top:725px;width:80px;text-align:center;transform:rotate(-90deg)">0</div>
<svg class="a" style="left:84px;top:303px" width="7" height="13"><path d="M0 0V13L7 6.5Z" fill="#000"/></svg>
<div id="canvas" class="a"><svg width="1044" height="577" viewBox="95 155 1044 577" style="position:absolute;left:0;top:0">
<path d="M100 687h1v1h-1zM100 637h1v1h-1zM100 586h1v1h-1zM100 536h1v1h-1zM100 486h1v1h-1zM100 435h1v1h-1zM100 385h1v1h-1zM100 335h1v1h-1zM100 284h1v1h-1zM100 234h1v1h-1zM100 184h1v1h-1zM150 687h1v1h-1zM150 637h1v1h-1zM150 586h1v1h-1zM150 536h1v1h-1zM150 486h1v1h-1zM150 435h1v1h-1zM150 385h1v1h-1zM150 335h1v1h-1zM150 284h1v1h-1zM150 234h1v1h-1zM150 184h1v1h-1zM201 687h1v1h-1zM201 637h1v1h-1zM201 586h1v1h-1zM201 536h1v1h-1zM201 486h1v1h-1zM201 435h1v1h-1zM201 385h1v1h-1zM201 335h1v1h-1zM201 284h1v1h-1zM201 234h1v1h-1zM201 184h1v1h-1zM251 687h1v1h-1zM251 637h1v1h-1zM251 586h1v1h-1zM251 536h1v1h-1zM251 486h1v1h-1zM251 435h1v1h-1zM251 385h1v1h-1zM251 335h1v1h-1zM251 284h1v1h-1zM251 234h1v1h-1zM251 184h1v1h-1zM301 687h1v1h-1zM301 637h1v1h-1zM301 586h1v1h-1zM301 536h1v1h-1zM301 486h1v1h-1zM301 435h1v1h-1zM301 385h1v1h-1zM301 335h1v1h-1zM301 284h1v1h-1zM301 234h1v1h-1zM301 184h1v1h-1zM352 687h1v1h-1zM352 637h1v1h-1zM352 586h1v1h-1zM352 536h1v1h-1zM352 486h1v1h-1zM352 435h1v1h-1zM352 385h1v1h-1zM352 335h1v1h-1zM352 284h1v1h-1zM352 234h1v1h-1zM352 184h1v1h-1zM402 687h1v1h-1zM402 637h1v1h-1zM402 586h1v1h-1zM402 536h1v1h-1zM402 486h1v1h-1zM402 435h1v1h-1zM402 385h1v1h-1zM402 335h1v1h-1zM402 284h1v1h-1zM402 234h1v1h-1zM402 184h1v1h-1zM452 687h1v1h-1zM452 637h1v1h-1zM452 586h1v1h-1zM452 536h1v1h-1zM452 486h1v1h-1zM452 435h1v1h-1zM452 385h1v1h-1zM452 335h1v1h-1zM452 284h1v1h-1zM452 234h1v1h-1zM452 184h1v1h-1zM503 687h1v1h-1zM503 637h1v1h-1zM503 586h1v1h-1zM503 536h1v1h-1zM503 486h1v1h-1zM503 435h1v1h-1zM503 385h1v1h-1zM503 335h1v1h-1zM503 284h1v1h-1zM503 234h1v1h-1zM503 184h1v1h-1zM553 687h1v1h-1zM553 637h1v1h-1zM553 586h1v1h-1zM553 536h1v1h-1zM553 486h1v1h-1zM553 435h1v1h-1zM553 385h1v1h-1zM553 335h1v1h-1zM553 284h1v1h-1zM553 234h1v1h-1zM553 184h1v1h-1zM603 687h1v1h-1zM603 637h1v1h-1zM603 586h1v1h-1zM603 536h1v1h-1zM603 486h1v1h-1zM603 435h1v1h-1zM603 385h1v1h-1zM603 335h1v1h-1zM603 284h1v1h-1zM603 234h1v1h-1zM603 184h1v1h-1zM654 687h1v1h-1zM654 637h1v1h-1zM654 586h1v1h-1zM654 536h1v1h-1zM654 486h1v1h-1zM654 435h1v1h-1zM654 385h1v1h-1zM654 335h1v1h-1zM654 284h1v1h-1zM654 234h1v1h-1zM654 184h1v1h-1zM704 687h1v1h-1zM704 637h1v1h-1zM704 586h1v1h-1zM704 536h1v1h-1zM704 486h1v1h-1zM704 435h1v1h-1zM704 385h1v1h-1zM704 335h1v1h-1zM704 284h1v1h-1zM704 234h1v1h-1zM704 184h1v1h-1zM755 687h1v1h-1zM755 637h1v1h-1zM755 586h1v1h-1zM755 536h1v1h-1zM755 486h1v1h-1zM755 435h1v1h-1zM755 385h1v1h-1zM755 335h1v1h-1zM755 284h1v1h-1zM755 234h1v1h-1zM755 184h1v1h-1zM805 687h1v1h-1zM805 637h1v1h-1zM805 586h1v1h-1zM805 536h1v1h-1zM805 486h1v1h-1zM805 435h1v1h-1zM805 385h1v1h-1zM805 335h1v1h-1zM805 284h1v1h-1zM805 234h1v1h-1zM805 184h1v1h-1zM855 687h1v1h-1zM855 637h1v1h-1zM855 586h1v1h-1zM855 536h1v1h-1zM855 486h1v1h-1zM855 435h1v1h-1zM855 385h1v1h-1zM855 335h1v1h-1zM855 284h1v1h-1zM855 234h1v1h-1zM855 184h1v1h-1zM906 687h1v1h-1zM906 637h1v1h-1zM906 586h1v1h-1zM906 536h1v1h-1zM906 486h1v1h-1zM906 435h1v1h-1zM906 385h1v1h-1zM906 335h1v1h-1zM906 284h1v1h-1zM906 234h1v1h-1zM906 184h1v1h-1zM956 687h1v1h-1zM956 637h1v1h-1zM956 586h1v1h-1zM956 536h1v1h-1zM956 486h1v1h-1zM956 435h1v1h-1zM956 385h1v1h-1zM956 335h1v1h-1zM956 284h1v1h-1zM956 234h1v1h-1zM956 184h1v1h-1zM1006 687h1v1h-1zM1006 637h1v1h-1zM1006 586h1v1h-1zM1006 536h1v1h-1zM1006 486h1v1h-1zM1006 435h1v1h-1zM1006 385h1v1h-1zM1006 335h1v1h-1zM1006 284h1v1h-1zM1006 234h1v1h-1zM1006 184h1v1h-1zM1057 687h1v1h-1zM1057 637h1v1h-1zM1057 586h1v1h-1zM1057 536h1v1h-1zM1057 486h1v1h-1zM1057 435h1v1h-1zM1057 385h1v1h-1zM1057 335h1v1h-1zM1057 284h1v1h-1zM1057 234h1v1h-1zM1057 184h1v1h-1zM1107 687h1v1h-1zM1107 637h1v1h-1zM1107 586h1v1h-1zM1107 536h1v1h-1zM1107 486h1v1h-1zM1107 435h1v1h-1zM1107 385h1v1h-1zM1107 335h1v1h-1zM1107 284h1v1h-1zM1107 234h1v1h-1zM1107 184h1v1h-1z" fill="#484848"/>
<path d="M95 536.5H1139M251.5 155V732M755.5 155V732" stroke="#2c2c2c" stroke-width="1" fill="none"/>
<path d="M478.5 260V255.5H406.5V345.5H478.5V340.8" stroke="#b0b0b0" stroke-width="1" fill="none" stroke-linejoin="round"/>
<path d="M478.5 262.5V338.4" stroke="#b0b0b0" stroke-width="1" fill="none" stroke-linejoin="round"/>
<path d="M478.5 260H469.5V262.5H478.5" stroke="#b0b0b0" stroke-width="1" fill="none" stroke-linejoin="round"/>
<path d="M478.5 338.4H469.5V340.8H478.5" stroke="#b0b0b0" stroke-width="1" fill="none" stroke-linejoin="round"/>
<path d="M444.5 260h10.2v2.5h-10.2z" stroke="#b0b0b0" stroke-width="1" fill="none" stroke-linejoin="round"/>
<path d="M444.5 338.4h10.2v2.4h-10.2z" stroke="#b0b0b0" stroke-width="1" fill="none" stroke-linejoin="round"/>
<path d="M498.5 260V255.5H569.5V345.5H498.5V340.8" stroke="#b0b0b0" stroke-width="1" fill="none" stroke-linejoin="round"/>
<path d="M498.5 262.5V338.4" stroke="#b0b0b0" stroke-width="1" fill="none" stroke-linejoin="round"/>
<path d="M498.5 260H507.5V262.5H498.5" stroke="#b0b0b0" stroke-width="1" fill="none" stroke-linejoin="round"/>
<path d="M498.5 338.4H507.5V340.8H498.5" stroke="#b0b0b0" stroke-width="1" fill="none" stroke-linejoin="round"/>
<path d="M521.8 260h11v2.5h-11z" stroke="#b0b0b0" stroke-width="1" fill="none" stroke-linejoin="round"/>
<path d="M521.8 338.4h11v2.4h-11z" stroke="#b0b0b0" stroke-width="1" fill="none" stroke-linejoin="round"/>
<path d="M481.5 393V381A7 7 0 0 1 495.5 381V393L508.5 401.6L509.4 400.4L516.3 406.6L515.4 407.8L529 419.6L519.8 473H503.2V475.5H518.6V480.6H458.2V475.5H473.6V473H457L448 419.6L461.6 407.8L460.7 406.6L467.6 400.4L468.5 401.6Z" stroke="#b0b0b0" stroke-width="1" fill="none" stroke-linejoin="round"/>
<path d="M488.5 381.5m-1.6 0a1.6 1.6 0 1 0 3.2 0a1.6 1.6 0 1 0 -3.2 0" stroke="#b0b0b0" stroke-width="1" fill="none" stroke-linejoin="round"/>
<circle cx="488.5" cy="428.3" r="14.3" stroke="#b0b0b0" fill="none"/>
<path transform="translate(488.5 428.3)" d="M-6.8 -8.1C-6 -10 -4 -9.9 -1.2 -9.9C0.5 -9.9 1.3 -8.5 1.3 -8.5L-0.4 -5.8L0.4 -4.1L9.2 7.9C7 7.5 4 7 1.3 7.9M-6.8 -8.1C-7.5 -5 -7.8 -1 -7.2 2C-6.6 4.5 -5 5.6 -3.7 6.2L1.3 7.9M-14 2.5L2 10.4M-13.7 4.6L1.3 11.6M-3.7 13.7L3.3 13.9L4.2 12M9.2 7.9L6 12" stroke="#b0b0b0" stroke-width="0.9" fill="none" stroke-linejoin="round"/>
<path d="M488.5 365V491" stroke="#a81414" stroke-width="0.85" stroke-dasharray="6 2 1 2" fill="none"/>
<path d="M477.7 381.5H498.5M467.7 428.5H509" stroke="#a81414" stroke-width="0.85" stroke-dasharray="6 2 1 2" fill="none"/>
<path d="M676.4 357L716.9 331.6Q745 318 770.4 309.2" stroke="#b0b0b0" stroke-width="1" fill="none" stroke-linejoin="round"/>
<path d="M676.4 357L716.4 342.2L775.2 309.2" stroke="#b0b0b0" stroke-width="1" fill="none" stroke-linejoin="round"/>
<path d="M678 356L716.4 340.5L773 308.5" stroke="#7a7a7a" stroke-width="1" fill="none" stroke-linejoin="round"/>
<path d="M714.8 338V333.7Q716 330.5 719 331Q723.5 331.8 724.6 335.8V347L721.5 344" stroke="#b0b0b0" stroke-width="1" fill="none" stroke-linejoin="round"/>
<path d="M719.6 337.4m-1.3 0a1.3 1.3 0 1 0 2.6 0a1.3 1.3 0 1 0 -2.6 0" stroke="#b0b0b0" stroke-width="1" fill="none" stroke-linejoin="round"/>
<path d="M770.4 309.2V301Q772 298 774.6 298.3Q779 299 781 305V315L778 311" stroke="#b0b0b0" stroke-width="1" fill="none" stroke-linejoin="round"/>
<path d="M775.5 305.6m-1.3 0a1.3 1.3 0 1 0 2.6 0a1.3 1.3 0 1 0 -2.6 0" stroke="#b0b0b0" stroke-width="1" fill="none" stroke-linejoin="round"/>
<path d="M782.1 308.1L819.7 364.6L755.3 402.1L716.4 342.2" stroke="#b0b0b0" stroke-width="1" fill="none" stroke-linejoin="round"/>
<path d="M789.6 329l1.5-1l5 7.5l-1.5 1z" stroke="#b0b0b0" stroke-width="1" fill="none" stroke-linejoin="round"/>
<path d="M700 347.5L707 344" stroke="#e0e0e0" stroke-width="1.4" fill="none" stroke-linejoin="round"/>
<path d="M691.3 352.9L697.2 397.3" stroke="#b0b0b0" stroke-width="1" fill="none" stroke-linejoin="round"/>
<path d="M748.4 392L743 424M750 392L744.6 424" stroke="#b0b0b0" stroke-width="1" fill="none" stroke-linejoin="round"/>
<path d="M676.9 388.3L755.3 432.5L818.9 396.8M676.9 393L755.3 438.9L818.9 402.1M676.9 388.3V393M755.3 432.5V438.9M818.9 396.8V402.1" stroke="#b0b0b0" stroke-width="1" fill="none" stroke-linejoin="round"/>
<path d="M678.5 390L755.3 434.5L817 399.5" stroke="#8a8a8a" stroke-width="1" fill="none" stroke-linejoin="round"/>
<path d="M676.9 388.3L694.5 378.7M682.8 388.8L694.5 382.9" stroke="#b0b0b0" stroke-width="1" fill="none" stroke-linejoin="round"/>
<path d="M800.8 376L798.1 392.5L784.8 385.6M800.8 386L818.9 396.8M716.4 409.6V416.5" stroke="#b0b0b0" stroke-width="1" fill="none" stroke-linejoin="round"/>
<ellipse cx="719.4" cy="375.4" rx="9.6" ry="13.8" transform="rotate(-28 719.4 375.4)" stroke="#b0b0b0" fill="none"/>
<ellipse cx="722" cy="375" rx="6.6" ry="11.6" transform="rotate(-28 722 375)" stroke="#b0b0b0" fill="none"/>
<path d="M719.5 366.5C722 371 724.5 377 727 383.5M720.8 365.8C723.3 370.3 725.8 376.3 728.3 382.8" stroke="#a8a8a8" stroke-width="0.8" fill="none" stroke-linejoin="round"/>
<path d="M712 379C714 382 717 385 721 387" stroke="#909090" stroke-width="0.8" fill="none" stroke-linejoin="round"/>
<path d="M733.8 361.5l1.2-0.8l4.5 7l-1.2 0.8z" stroke="#a0a0a0" stroke-width="0.8" fill="none" stroke-linejoin="round"/>
<path d="M717.6 341.6L741.6 379.3" stroke="#808080" stroke-width="0.8" fill="none" stroke-linejoin="round"/>
<path d="M422.5 520.5H478.5V525.8H422.5Z" stroke="#b0b0b0" stroke-width="1" fill="none" stroke-linejoin="round"/>
<path d="M498.5 520.5H553.9V525.8H498.5Z" stroke="#b0b0b0" stroke-width="1" fill="none" stroke-linejoin="round"/>
<path d="M422.5 626.6H478.5V632.4H422.5Z" stroke="#b0b0b0" stroke-width="1" fill="none" stroke-linejoin="round"/>
<path d="M498.5 626.6H553.9V632.4H498.5Z" stroke="#b0b0b0" stroke-width="1" fill="none" stroke-linejoin="round"/>
<path d="M412.5 532.4H417.6V619.5H412.5Z" stroke="#b0b0b0" stroke-width="1" fill="none" stroke-linejoin="round"/>
<path d="M558.5 532.4H563.9V619.5H558.5Z" stroke="#b0b0b0" stroke-width="1" fill="none" stroke-linejoin="round"/>
<path d="M478.5 535.2V530.6H422.5V621.8H478.5V616.4H462.9V614.3H478.5V538.2" stroke="#b0b0b0" stroke-width="1" fill="none" stroke-linejoin="round"/>
<path d="M498.5 535.2V530.6H553.9V621.8H498.5V616.4H513.6V614.3H498.5V538.2" stroke="#b0b0b0" stroke-width="1" fill="none" stroke-linejoin="round"/>
<rect x="462.9" y="535.2" width="15.6" height="2.8" fill="#3a3a3a" stroke="#b0b0b0" stroke-width="0.8"/>
<rect x="498.5" y="535.2" width="15.1" height="2.8" fill="#3a3a3a" stroke="#b0b0b0" stroke-width="0.8"/>
<path d="M749 518.4V511A6.7 6.7 0 0 1 762.3 511V518.4" stroke="#b0b0b0" stroke-width="1" fill="none" stroke-linejoin="round"/>
<path d="M755.6 511m-1.5 0a1.5 1.5 0 1 0 3 0a1.5 1.5 0 1 0 -3 0" stroke="#b0b0b0" stroke-width="1" fill="none" stroke-linejoin="round"/>
<path d="M699.6 561.1L755.6 515.8L810.7 561.1M701 562.5L755.6 518.3L809.5 562.5" stroke="#b0b0b0" stroke-width="1" fill="none" stroke-linejoin="round"/>
<path d="M715.2 550L722.6 598M795.8 550L788.4 598" stroke="#b0b0b0" stroke-width="1" fill="none" stroke-linejoin="round"/>
<path d="M699.2 598H810.7V604.6H699.2Z" stroke="#b0b0b0" stroke-width="1" fill="none" stroke-linejoin="round"/>
<path d="M699.2 602.6H810.7" stroke="#8a8a8a" stroke-width="1" fill="none" stroke-linejoin="round"/>
<path d="M724.8 604.6V609.6H786.3V604.6" stroke="#b0b0b0" stroke-width="1" fill="none" stroke-linejoin="round"/>
<circle cx="755.6" cy="557.3" r="14.6" stroke="#b0b0b0" fill="none"/>
<path transform="translate(755.5 557.3)" d="M-6.8 -8.1C-6 -10 -4 -9.9 -1.2 -9.9C0.5 -9.9 1.3 -8.5 1.3 -8.5L-0.4 -5.8L0.4 -4.1L9.2 7.9C7 7.5 4 7 1.3 7.9M-6.8 -8.1C-7.5 -5 -7.8 -1 -7.2 2C-6.6 4.5 -5 5.6 -3.7 6.2L1.3 7.9M-14 2.5L2 10.4M-13.7 4.6L1.3 11.6M-3.7 13.7L3.3 13.9L4.2 12M9.2 7.9L6 12" stroke="#b0b0b0" stroke-width="0.9" fill="none" stroke-linejoin="round"/>
<path d="M757.3 504.5H826.5M825.8 504.5V609.5M786.3 609.5H826.5M699.6 605V627.5M810.7 605V627.5M699.6 627H810.7" stroke="#086a6a" stroke-width="1" fill="none"/>
<path d="M699.6 627l4-1.5v3zM810.7 627l-4-1.5v3zM825.8 504.5l-1.5 4h3zM825.8 609.5l-1.5-4h3z" fill="#086a6a"/>
<text x="755.6" y="625.5" font-family="Liberation Sans" font-size="6" fill="#086a6a" text-anchor="middle">220</text>
<text transform="translate(823.5 557.5) rotate(-90)" font-family="Liberation Sans" font-size="6" fill="#086a6a" text-anchor="middle">235</text>
<path d="M755.6 495V637" stroke="#a81414" stroke-width="0.85" stroke-dasharray="6 2 1 2" fill="none"/>
<path d="M231.3 536.5H271.8M251.5 516.3V556.8" stroke="#a80000" stroke-width="1" fill="none"/>
<circle cx="251.5" cy="536.5" r="5.2" stroke="#b00000" stroke-width="1" fill="none"/>
</svg></div>
<div id="vscroll" class="a"><div class="a" style="left:4px;top:148.5px;width:8px;height:278.5px;border-radius:4px;background:#808080"></div></div>
<div id="hscroll" class="a"><div class="a" style="left:73px;top:4px;width:826px;height:8px;border-radius:4px;background:#808080"></div></div>
<div class="a" style="left:1067px;top:732px;width:86px;height:16px;background:#ececec"></div>
<div class="a" style="left:1050px;top:733px;width:103px;text-align:right;font-size:13px;line-height:15px;color:#111">100 &lt; 1000</div>
<div id="cmdout" class="a"></div>
<div class="a" style="left:77px;top:750px;font-size:13px;line-height:16px;color:#0c0cd0"><i>Comando:</i> new</div>
<div class="a" style="left:1139px;top:750px;width:14px;height:20px;background:#f6f6f6"><div class="a" style="left:3px;top:0px;width:8px;height:16.7px;border-radius:4px;background:#808080"></div></div>
<div id="cmdin" class="a"></div>
<div class="a" style="left:73px;top:778px;font-size:13px;line-height:16px;color:#111">Comando:</div>
<div class="a" style="left:138px;top:776px;width:989px;height:18px;background:#fff"></div>
<div class="a" style="left:1127px;top:772px;width:26px;height:26px;background:#f2f2f2;border:1px solid #b0b0b0"></div>
<svg class="a" style="left:1132px;top:779px" width="16" height="12" viewBox="0 0 16 12"><rect x="1.5" y="1.5" width="13.5" height="9.5" fill="#f4f4f4" stroke="#111" stroke-width="1"/><rect x="1" y="1" width="14.5" height="2.8" fill="#111"/><rect x="11.5" y="1.6" width="1.4" height="1.2" fill="#bbb"/></svg>
<div id="dock" class="a"></div>
<div class="a" style="left:1154px;top:108px;width:300px;height:23px;background:linear-gradient(#eeeeee,#dadada);border-bottom:2px solid #bababa"></div>
<div class="a" style="left:1154px;top:130px;width:2px;height:668px;background:linear-gradient(90deg,#d6d6d6,#b4b4b4)"></div>
<svg class="a" style="left:1156px;top:110px" width="34" height="16" viewBox="0 0 34 16"><circle cx="8" cy="8" r="7" fill="#6f6f6f"/><path d="M5.3 5.3L10.7 10.7M10.7 5.3L5.3 10.7" stroke="#fff" stroke-width="2"/><circle cx="26" cy="8" r="7" fill="#6f6f6f"/><rect x="24" y="4.2" width="5.2" height="4.2" fill="none" stroke="#fff" stroke-width="1.2"/><rect x="22" y="6.8" width="5.2" height="4.2" fill="#6f6f6f" stroke="#fff" stroke-width="1.2"/></svg>
<div class="a" style="left:1280px;top:112px;font-size:12px;line-height:14px;color:#222">Elenco dei livelli</div>
<div class="a lyb" style="left:1156px;top:131px"></div>
<div class="a lyb" style="left:1216px;top:131px"></div>
<div class="a lyb" style="left:1276px;top:131px"></div>
<div class="a lyb" style="left:1336px;top:131px"></div>
<div class="a lyb" style="left:1396px;top:131px"></div>
<svg class="a" style="left:1177px;top:137px" width="17" height="13" viewBox="0 0 17 13"><path d="M0.8 6.5Q2 3 5 1.5Q8 0.3 11 1Q14.5 2 15.2 5L15.8 6.5L14.5 8Q13 11 10 11.5Q7 12 4.5 11Q2 9.5 0.8 6.5Z" fill="#000"/><ellipse cx="8.3" cy="6.6" rx="5.1" ry="3.7" fill="#fff"/><circle cx="8.2" cy="5.6" r="2.9" fill="#000"/><path d="M7.2 4l0.9 1.5" stroke="#888" stroke-width="0.7"/></svg>
<svg class="a" style="left:1237px;top:137px" width="17" height="13" viewBox="0 0 17 13"><path d="M0.8 6.5Q2 3 5 1.5Q8 0.3 11 1Q14.5 2 15.2 5L15.8 6.5L14.5 8Q13 11 10 11.5Q7 12 4.5 11Q2 9.5 0.8 6.5Z" fill="#b3b3b3"/><ellipse cx="8.3" cy="6.6" rx="5.1" ry="3.7" fill="#fff"/><circle cx="8.2" cy="5.6" r="2.9" fill="#b3b3b3"/><path d="M7.2 4l0.9 1.5" stroke="#888" stroke-width="0.7"/></svg>
<svg class="a" style="left:1297px;top:136px" width="16" height="16" viewBox="0 0 16 16"><path d="M8 1V15M1 8H15" stroke="#e01616" stroke-width="3.4"/></svg>
<svg class="a" style="left:1357px;top:136px" width="16" height="16" viewBox="0 0 16 16"><path d="M1 7.5H15" stroke="#e01616" stroke-width="3.4"/></svg>
<svg class="a" style="left:1416px;top:134px" width="18" height="18" viewBox="0 0 18 18"><path d="M1 17L2.5 12.5L13 2C14 1 15.5 1 16.3 1.8C17 2.6 17 4 16 5L5.5 15.5Z" fill="#f1a92b" stroke="#8a5a12" stroke-width="0.7"/><path d="M12.5 2.5L15.5 5.5" stroke="#e04f3a" stroke-width="1.6"/><path d="M1 17L2.5 12.5L5.5 15.5Z" fill="#f3dcb6"/><path d="M1 17L1.6 15.2L2.8 16.4Z" fill="#222"/></svg>
<div class="a" style="left:1156px;top:156px;width:298px;height:642px;background:#fff;border-top:1px solid #cfcfcf"></div>
<div class="a" style="left:1161px;top:163px;width:16px;height:9px;background:#000;border:1px solid #111"></div>
<div class="a" style="left:1183px;top:159px;font-size:13.4px;line-height:16px;color:#111">0</div>
<svg class="a" style="left:1415px;top:161px" width="17" height="13" viewBox="0 0 17 13"><path d="M0.8 6.5Q2 3 5 1.5Q8 0.3 11 1Q14.5 2 15.2 5L15.8 6.5L14.5 8Q13 11 10 11.5Q7 12 4.5 11Q2 9.5 0.8 6.5Z" fill="#000"/><ellipse cx="8.3" cy="6.6" rx="5.1" ry="3.7" fill="#fff"/><circle cx="8.2" cy="5.6" r="2.9" fill="#000"/><path d="M7.2 4l0.9 1.5" stroke="#888" stroke-width="0.7"/></svg>
<svg class="a" style="left:1437px;top:158px" width="15" height="17" viewBox="0 0 15 17"><path d="M4.3 9V5.8A3.2 3.2 0 0 1 10.7 5.8V9" fill="none" stroke="#b8b8b8" stroke-width="1.1"/><rect x="3" y="8.6" width="9.5" height="7" fill="#b8b8b8"/></svg>
<div class="a" style="left:1161px;top:183px;width:16px;height:9px;background:#000;border:1px solid #111"></div>
<div class="a" style="left:1183px;top:179px;font-size:13.4px;line-height:16px;color:#111">Bordo</div>
<svg class="a" style="left:1415px;top:181px" width="17" height="13" viewBox="0 0 17 13"><path d="M0.8 6.5Q2 3 5 1.5Q8 0.3 11 1Q14.5 2 15.2 5L15.8 6.5L14.5 8Q13 11 10 11.5Q7 12 4.5 11Q2 9.5 0.8 6.5Z" fill="#000"/><ellipse cx="8.3" cy="6.6" rx="5.1" ry="3.7" fill="#fff"/><circle cx="8.2" cy="5.6" r="2.9" fill="#000"/><path d="M7.2 4l0.9 1.5" stroke="#888" stroke-width="0.7"/></svg>
<svg class="a" style="left:1437px;top:178px" width="15" height="17" viewBox="0 0 15 17"><path d="M4.3 9V5.8A3.2 3.2 0 0 1 10.7 5.8V9" fill="none" stroke="#b8b8b8" stroke-width="1.1"/><rect x="3" y="8.6" width="9.5" height="7" fill="#b8b8b8"/></svg>
<div class="a" style="left:1161px;top:203px;width:16px;height:9px;background:#ee0b0b;border:1px solid #111"></div>
<div class="a" style="left:1183px;top:199px;font-size:13.4px;line-height:16px;color:#111">Centro</div>
<svg class="a" style="left:1415px;top:201px" width="17" height="13" viewBox="0 0 17 13"><path d="M0.8 6.5Q2 3 5 1.5Q8 0.3 11 1Q14.5 2 15.2 5L15.8 6.5L14.5 8Q13 11 10 11.5Q7 12 4.5 11Q2 9.5 0.8 6.5Z" fill="#000"/><ellipse cx="8.3" cy="6.6" rx="5.1" ry="3.7" fill="#fff"/><circle cx="8.2" cy="5.6" r="2.9" fill="#000"/><path d="M7.2 4l0.9 1.5" stroke="#888" stroke-width="0.7"/></svg>
<svg class="a" style="left:1437px;top:198px" width="15" height="17" viewBox="0 0 15 17"><path d="M4.3 9V5.8A3.2 3.2 0 0 1 10.7 5.8V9" fill="none" stroke="#b8b8b8" stroke-width="1.1"/><rect x="3" y="8.6" width="9.5" height="7" fill="#b8b8b8"/></svg>
<div class="a" style="left:1161px;top:223px;width:16px;height:9px;background:#fff;border:1px solid #111"></div>
<div class="a" style="left:1183px;top:219px;font-size:13.4px;line-height:16px;color:#111">Defpoints</div>
<svg class="a" style="left:1415px;top:221px" width="17" height="13" viewBox="0 0 17 13"><path d="M0.8 6.5Q2 3 5 1.5Q8 0.3 11 1Q14.5 2 15.2 5L15.8 6.5L14.5 8Q13 11 10 11.5Q7 12 4.5 11Q2 9.5 0.8 6.5Z" fill="#000"/><ellipse cx="8.3" cy="6.6" rx="5.1" ry="3.7" fill="#fff"/><circle cx="8.2" cy="5.6" r="2.9" fill="#000"/><path d="M7.2 4l0.9 1.5" stroke="#888" stroke-width="0.7"/></svg>
<svg class="a" style="left:1437px;top:218px" width="15" height="17" viewBox="0 0 15 17"><path d="M4.3 9V5.8A3.2 3.2 0 0 1 10.7 5.8V9" fill="none" stroke="#b8b8b8" stroke-width="1.1"/><rect x="3" y="8.6" width="9.5" height="7" fill="#b8b8b8"/></svg>
<div class="a" style="left:1161px;top:243px;width:16px;height:9px;background:#0f8080;border:1px solid #111"></div>
<div class="a" style="left:1183px;top:239px;font-size:13.4px;line-height:16px;color:#111">Quote</div>
<svg class="a" style="left:1415px;top:241px" width="17" height="13" viewBox="0 0 17 13"><path d="M0.8 6.5Q2 3 5 1.5Q8 0.3 11 1Q14.5 2 15.2 5L15.8 6.5L14.5 8Q13 11 10 11.5Q7 12 4.5 11Q2 9.5 0.8 6.5Z" fill="#000"/><ellipse cx="8.3" cy="6.6" rx="5.1" ry="3.7" fill="#fff"/><circle cx="8.2" cy="5.6" r="2.9" fill="#000"/><path d="M7.2 4l0.9 1.5" stroke="#888" stroke-width="0.7"/></svg>
<svg class="a" style="left:1437px;top:238px" width="15" height="17" viewBox="0 0 15 17"><path d="M4.3 9V5.8A3.2 3.2 0 0 1 10.7 5.8V9" fill="none" stroke="#b8b8b8" stroke-width="1.1"/><rect x="3" y="8.6" width="9.5" height="7" fill="#b8b8b8"/></svg>
<div class="a" style="left:1161px;top:263px;width:16px;height:9px;background:#000;border:1px solid #111"></div>
<div class="a" style="left:1183px;top:259px;font-size:13.4px;line-height:16px;color:#111">Visibile</div>
<svg class="a" style="left:1415px;top:261px" width="17" height="13" viewBox="0 0 17 13"><path d="M0.8 6.5Q2 3 5 1.5Q8 0.3 11 1Q14.5 2 15.2 5L15.8 6.5L14.5 8Q13 11 10 11.5Q7 12 4.5 11Q2 9.5 0.8 6.5Z" fill="#000"/><ellipse cx="8.3" cy="6.6" rx="5.1" ry="3.7" fill="#fff"/><circle cx="8.2" cy="5.6" r="2.9" fill="#000"/><path d="M7.2 4l0.9 1.5" stroke="#888" stroke-width="0.7"/></svg>
<svg class="a" style="left:1437px;top:258px" width="15" height="17" viewBox="0 0 15 17"><path d="M4.3 9V5.8A3.2 3.2 0 0 1 10.7 5.8V9" fill="none" stroke="#b8b8b8" stroke-width="1.1"/><rect x="3" y="8.6" width="9.5" height="7" fill="#b8b8b8"/></svg>
<svg class="a" style="left:1392px;top:258px" width="18" height="18" viewBox="0 0 18 18"><path d="M1 17L2.5 12.5L13 2C14 1 15.5 1 16.3 1.8C17 2.6 17 4 16 5L5.5 15.5Z" fill="#f1a92b" stroke="#8a5a12" stroke-width="0.7"/><path d="M12.5 2.5L15.5 5.5" stroke="#e04f3a" stroke-width="1.6"/><path d="M1 17L2.5 12.5L5.5 15.5Z" fill="#f3dcb6"/><path d="M1 17L1.6 15.2L2.8 16.4Z" fill="#222"/></svg>
<div id="rtb" class="a"></div>
<div class="a gd" style="left:1462.0px;top:116px"></div><div class="a gd" style="left:1467.3px;top:116px"></div><div class="a gd" style="left:1472.6px;top:116px"></div><div class="a gd" style="left:1477.9px;top:116px"></div><div class="a gd" style="left:1483.2px;top:116px"></div><div class="a gd" style="left:1488.5px;top:116px"></div>
<div class="a selbtn" style="left:1456px;top:120px;width:42px;height:42px"></div>
<svg class="a" style="left:1463px;top:127px" width="29" height="29" viewBox="0 0 29 29"><rect x="0.5" y="0.5" width="27.5" height="27.5" fill="#fff" stroke="#111" stroke-width="1"/><rect x="0.5" y="0.5" width="27.5" height="5" fill="#111"/><rect x="2" y="1.6" width="3" height="3" fill="#fff"/><path d="M8 14L16 11V21L8 24Z" fill="#cfcfcf" stroke="#333" stroke-width="0.7"/><path d="M10 13L18 10V20L10 23Z" fill="#e6e6e6" stroke="#333" stroke-width="0.7"/><path d="M12 12L21 9V19L12 22Z" fill="#fff" stroke="#333" stroke-width="0.7"/><path d="M14.5 19L17.5 12L18 18Z" fill="none" stroke="#e33" stroke-width="0.9"/></svg>
<div class="a" style="left:1448px;top:159px;width:76px;height:76px;border-radius:50%;border:5px solid rgba(150,180,210,0.45);background:rgba(170,195,220,0.12)"></div>
<div class="a" style="left:1456px;top:167px;width:42px;height:42px;background:radial-gradient(ellipse at center,rgba(255,190,190,0.55),rgba(230,120,120,0.5))"></div>
<div class="a" style="left:1447px;top:166px;width:53px;height:2px;background:rgba(245,90,90,0.55)"></div>
<div class="a" style="left:1447px;top:208px;width:53px;height:2px;background:rgba(245,90,90,0.55)"></div>
<div class="a" style="left:1455px;top:150px;width:2px;height:100px;background:rgba(245,90,90,0.3)"></div>
<div class="a" style="left:1497px;top:150px;width:2px;height:100px;background:rgba(245,90,90,0.3)"></div>
<svg class="a" style="left:1463px;top:174px" width="29" height="29" viewBox="0 0 29 29"><rect x="0.5" y="0.5" width="27.5" height="27.5" fill="#fdd" stroke="#111" stroke-width="1"/><rect x="0.5" y="0.5" width="27.5" height="5" fill="#111"/><rect x="2" y="1.6" width="3" height="3" fill="#fff"/><rect x="7" y="10" width="11" height="8.5" fill="#f9c9a0" stroke="#7a5030" stroke-width="0.8"/><circle cx="17" cy="18.5" r="5" fill="#f9c9a0" stroke="#7a5030" stroke-width="0.8"/></svg>
<svg class="a" style="left:1463px;top:220px" width="29" height="10" viewBox="0 0 29 10"><rect x="0.5" y="0.5" width="27.5" height="9" fill="#fff" stroke="#111" stroke-width="1"/><rect x="0.5" y="0.5" width="27.5" height="5" fill="#111"/></svg>
<div class="a gd" style="left:1460.0px;top:261px;width:1px;height:1px"></div><div class="a gd" style="left:1464.2px;top:261px;width:1px;height:1px"></div><div class="a gd" style="left:1468.4px;top:261px;width:1px;height:1px"></div><div class="a gd" style="left:1472.6px;top:261px;width:1px;height:1px"></div><div class="a gd" style="left:1476.8px;top:261px;width:1px;height:1px"></div><div class="a gd" style="left:1481.0px;top:261px;width:1px;height:1px"></div><div class="a gd" style="left:1485.2px;top:261px;width:1px;height:1px"></div><div class="a gd" style="left:1489.4px;top:261px;width:1px;height:1px"></div><div class="a gd" style="left:1493.6px;top:261px;width:1px;height:1px"></div>
<svg class="a" style="left:1463px;top:276px" width="29" height="29" viewBox="0 0 29 29"><rect x="0.5" y="0.5" width="27.5" height="27.5" fill="#fff" stroke="#111" stroke-width="1"/><rect x="0.5" y="0.5" width="27.5" height="5" fill="#111"/><rect x="2" y="1.6" width="3" height="3" fill="#fff"/><rect x="4" y="9" width="4" height="3" fill="#111"/><rect x="4" y="15" width="4" height="3" fill="#111"/><rect x="4" y="21" width="4" height="3" fill="#111"/><rect x="10" y="9" width="15" height="3" fill="#fff" stroke="#111" stroke-width="0.7"/><rect x="10" y="15" width="15" height="3" fill="#fff" stroke="#111" stroke-width="0.7"/><rect x="10" y="21" width="15" height="3" fill="#fff" stroke="#111" stroke-width="0.7"/></svg>
<svg class="a" style="left:1463px;top:321px" width="29" height="29" viewBox="0 0 29 29"><rect x="0.5" y="0.5" width="27.5" height="27.5" fill="#fff" stroke="#111" stroke-width="1"/><rect x="0.5" y="0.5" width="27.5" height="5" fill="#111"/><rect x="2" y="1.6" width="3" height="3" fill="#fff"/><path d="M5 10H23L16 17V24L12 22V17Z" fill="#ddd" stroke="#444" stroke-width="0.8"/></svg>
<svg class="a" style="left:1463px;top:367px" width="29" height="29" viewBox="0 0 29 29"><rect x="0.5" y="0.5" width="27.5" height="27.5" fill="#fff" stroke="#111" stroke-width="1"/><rect x="0.5" y="0.5" width="27.5" height="5" fill="#111"/><rect x="2" y="1.6" width="3" height="3" fill="#fff"/><path d="M6 11L10 13V20L6 22Z" fill="#eee" stroke="#333" stroke-width="0.8"/><rect x="10" y="13" width="13" height="7" fill="#ddd" stroke="#333" stroke-width="0.8"/><path d="M5 16.5H26" stroke="#e66" stroke-width="0.8" stroke-dasharray="1.5 1"/></svg>
<div class="a gd" style="left:1460.0px;top:410px;width:1px;height:1px"></div><div class="a gd" style="left:1464.2px;top:410px;width:1px;height:1px"></div><div class="a gd" style="left:1468.4px;top:410px;width:1px;height:1px"></div><div class="a gd" style="left:1472.6px;top:410px;width:1px;height:1px"></div><div class="a gd" style="left:1476.8px;top:410px;width:1px;height:1px"></div><div class="a gd" style="left:1481.0px;top:410px;width:1px;height:1px"></div><div class="a gd" style="left:1485.2px;top:410px;width:1px;height:1px"></div><div class="a gd" style="left:1489.4px;top:410px;width:1px;height:1px"></div><div class="a gd" style="left:1493.6px;top:410px;width:1px;height:1px"></div>
<div class="a selbtn" style="left:1456px;top:417px;width:42px;height:43px"></div>
<svg class="a" style="left:1463px;top:424px" width="29" height="29" viewBox="0 0 29 29"><rect x="0.5" y="0.5" width="27.5" height="27.5" fill="#fff" stroke="#111" stroke-width="1"/><rect x="0.5" y="0.5" width="27.5" height="5" fill="#111"/><rect x="2" y="1.6" width="3" height="3" fill="#fff"/><path d="M2.5 9H12M2.5 12.5H11M2.5 16H13M2.5 19.5H14" stroke="#9a9a9a" stroke-width="0.9"/><path d="M0.5 22.5H28" stroke="#111" stroke-width="0.8"/><path d="M3 25.5L4.5 24M3 25.5L4.5 27" stroke="#555" stroke-width="0.6"/><path d="M9 25.7H26" stroke="#777" stroke-width="1.6"/></svg>
<svg class="a" style="left:1463px;top:471px" width="29" height="29" viewBox="0 0 29 29"><rect x="0.5" y="0.5" width="27.5" height="27.5" fill="#fff" stroke="#111" stroke-width="1"/><rect x="0.5" y="0.5" width="27.5" height="5" fill="#111"/><rect x="2" y="1.6" width="3" height="3" fill="#fff"/><rect x="7.5" y="9.5" width="13" height="15.5" rx="0.8" fill="#c08a2a" stroke="#8f6216" stroke-width="0.5"/><rect x="9" y="11" width="10" height="12.5" fill="#f4f4f4"/><path d="M10.5 14H17.5M10.5 16H17.5M10.5 18H16" stroke="#ccc" stroke-width="0.7"/><path d="M19 20.5L16 23.5H19Z" fill="#aaa"/><rect x="11" y="8" width="6" height="3" rx="0.8" fill="#a9a9a2" stroke="#777" stroke-width="0.4"/></svg>
<div class="a" style="left:1372px;top:224px;width:122px;height:24px;background:linear-gradient(#fbfbfb,#e9edf2);border:1px solid #c7ccd2;border-radius:3px;box-shadow:1px 2px 2px rgba(0,0,0,0.3)"></div>
<div class="a" style="left:1377px;top:228px;font-size:14px;line-height:16px;color:#111">Elenco dei blocchi</div>
<svg class="a" style="left:1486px;top:197px" width="16" height="26" viewBox="0 0 16 26"><path d="M2 1.5V20L6.5 15.8L10 23.5L13.5 22L10 14.5H16Z" fill="#fff" stroke="#000" stroke-width="1.3" stroke-linejoin="round"/></svg>
<div id="status" class="a"></div>
<div class="a st" style="left:2px;top:806.2px;letter-spacing:0.8px">1738.439,449.3909</div>
<div class="a st" style="left:2px;top:826.5px;letter-spacing:0.72px">@1738.439,449.3909</div>
<div class="a" style="left:253px;top:802px;width:1px;height:40px;background:#8a8a8a"></div>
<div class="a" style="left:254px;top:802px;width:1px;height:40px;background:#f2f2f2"></div>
<div class="a st" style="left:256.4px;top:806.5px;letter-spacing:0.58px">1795.5842&lt;14°</div>
<div class="a st" style="left:256.4px;top:826.5px;letter-spacing:0.58px">@1795.5842&lt;14°</div>
<div class="a" style="left:507px;top:819px;width:6px;height:6px;border-radius:3px;background:#c4c4c4"></div>
<div class="a st" style="left:572px;top:816.5px;letter-spacing:0.54px">Selezionare entità o regione</div>
<svg class="a" style="left:716px;top:805px" width="20" height="32" viewBox="0 0 20 32"><rect x="1" y="1" width="18" height="30" rx="9" fill="#fff" stroke="#444" stroke-width="0.9"/><path d="M1.3 13.7Q10 12.5 18.7 13.7M10 1V13" stroke="#444" stroke-width="0.8" fill="none"/><rect x="8.7" y="3" width="2.6" height="8" rx="1.3" fill="#fff" stroke="#444" stroke-width="0.8"/></svg>
<div class="a" style="left:940px;top:819px;width:6px;height:6px;border-radius:3px;background:#c4c4c4"></div>
<div class="a st" style="left:949px;top:816.5px;letter-spacing:0.52px">Nessun entità selezionate.</div>
<div class="a" style="left:1269px;top:819px;width:6px;height:6px;border-radius:3px;background:#c4c4c4"></div>
</body></html>
